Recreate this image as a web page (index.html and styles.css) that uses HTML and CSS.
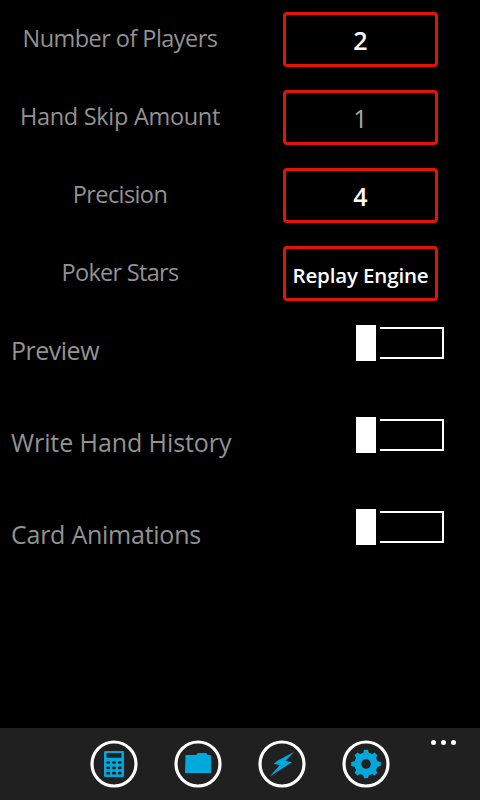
FILE: index.html
```html
<!DOCTYPE html>
<html lang="en">
<head>
<meta charset="utf-8">
<title>Settings</title>
<link rel="stylesheet" href="styles.css">
</head>
<body>
<main class="settings">
  <div class="field"><label class="caption players">Number of Players</label><button class="box">2</button></div>
  <div class="field"><label class="caption skip">Hand Skip Amount</label><button class="box muted">1</button></div>
  <div class="field"><label class="caption precision">Precision</label><button class="box">4</button></div>
  <div class="field"><label class="caption stars">Poker Stars</label><button class="box engine"><span>Replay Engine</span></button></div>
  <div class="option"><span class="name preview">Preview</span><span class="toggle"><i class="thumb"></i><i class="track"></i></span></div>
  <div class="option"><span class="name history">Write Hand History</span><span class="toggle"><i class="thumb"></i><i class="track"></i></span></div>
  <div class="option"><span class="name animations">Card Animations</span><span class="toggle"><i class="thumb"></i><i class="track"></i></span></div>
</main>
<footer class="appbar">
  <svg class="icon" viewBox="0 0 48 48"><circle class="ring" cx="24" cy="24" r="22"/>
    <path class="glyph" fill-rule="evenodd" d="M15.2 11h17.6q1.2 0 1.2 1.2v23.6q0 1.2-1.2 1.2H15.2q-1.2 0-1.2-1.2V12.2q0-1.2 1.2-1.2zM17.5 13h13q1 0 1 1v2.8q0 1-1 1h-13q-1 0-1-1V14q0-1 1-1z"/>
    <g class="keys"><rect x="16.3" y="21.2" width="3.8" height="2.6" rx="1.2"/><rect x="22.1" y="21.2" width="3.8" height="2.6" rx="1.2"/><rect x="27.8" y="21.2" width="3.8" height="2.6" rx="1.2"/><rect x="16.3" y="26.4" width="3.8" height="2.9" rx="1.2"/><rect x="22.1" y="26.4" width="3.8" height="2.9" rx="1.2"/><rect x="27.8" y="26.4" width="3.8" height="2.9" rx="1.2"/><rect x="16.3" y="31.7" width="3.8" height="2.9" rx="1.2"/><rect x="22.1" y="31.7" width="3.8" height="2.9" rx="1.2"/><rect x="27.8" y="31.7" width="3.8" height="2.9" rx="1.2"/></g></svg>
  <svg class="icon" viewBox="0 0 48 48"><circle class="ring" cx="24" cy="24" r="22"/>
    <path class="glyph" d="M11.5 15h11.3v-1l1-1h8.4l1 1v1h3l.8.8V33H11z"/></svg>
  <svg class="icon" viewBox="0 0 48 48"><circle class="ring" cx="24" cy="24" r="22"/>
    <path class="glyph" d="M36.3 11.7 27.6 20.8 33.8 22.3 11.8 36.6 21.8 24.9 15.6 23.9 19 21z"/></svg>
  <svg class="icon" viewBox="0 0 48 48"><circle class="ring" cx="24" cy="24" r="22"/>
    <g class="glyph"><path fill-rule="evenodd" d="M24 12.4a11.6 11.6 0 1 0 0 23.2 11.6 11.6 0 0 0 0-23.2zm0 6.8a4.8 4.8 0 1 1 0 9.6 4.8 4.8 0 0 1 0-9.6z"/>
    <path id="tooth" d="M21 14l1-4.2h4l1 4.2z"/><use href="#tooth" transform="rotate(45 24 24)"/><use href="#tooth" transform="translate(.6 0) rotate(90 24 24)"/><use href="#tooth" transform="rotate(135 24 24)"/><use href="#tooth" transform="rotate(180 24 24)"/><use href="#tooth" transform="rotate(225 24 24)"/><use href="#tooth" transform="translate(-.6 0) rotate(270 24 24)"/><use href="#tooth" transform="rotate(315 24 24)"/></g></svg>
  <div class="more"><i></i><i></i><i></i></div>
</footer>
</body>
</html>
```

FILE: styles.css
```css
* { box-sizing: border-box; }
body {
  margin: 0;
  width: 480px;
  height: 800px;
  display: flex;
  flex-direction: column;
  background: #000;
  color: #929292;
  font-family: "Open Sans", "Noto Sans", sans-serif;
  overflow: hidden;
}
.settings { flex: 1; }
.field {
  height: 78px;
  display: grid;
  grid-template-columns: 240px 240px;
}
.caption {
  padding-top: 22px;
  font-size: 23.5px;
  line-height: 32px;
  text-align: center;
  white-space: nowrap;
}
.players { letter-spacing: -0.55px; }
.skip { letter-spacing: -0.3px; }
.precision { letter-spacing: -0.6px; }
.stars { letter-spacing: -0.7px; }
.box {
  width: 155px;
  height: 55px;
  margin: 12px 0 0 43px;
  padding: 1px 0 0;
  border: 3px solid #e51400;
  border-radius: 4px;
  background: #000;
  color: #fff;
  font: 600 25px/32px "Open Sans", "Noto Sans", sans-serif;
  white-space: nowrap;
}
.muted { color: #aaa; font-weight: 400; }
.engine { padding-top: 3px; font-size: 20.5px; letter-spacing: -0.15px; }
.option {
  height: 92px;
  padding: 13px 36px 0 11px;
  display: flex;
  justify-content: space-between;
}
.name {
  padding-top: 8px;
  font-size: 25px;
  line-height: 34px;
  white-space: nowrap;
}
.preview { letter-spacing: -0.5px; }
.history { letter-spacing: -0.08px; }
.animations { letter-spacing: -0.25px; }
.toggle {
  width: 88px;
  height: 36px;
  display: flex;
  align-items: center;
  gap: 4px;
}
.thumb { width: 20px; height: 36px; background: #fff; }
.track {
  width: 64px;
  height: 32px;
  border: 2px solid #fff;
  border-left: 0;
}
.appbar {
  height: 72px;
  padding: 12px 24px 0 90px;
  display: flex;
  gap: 36px;
  background: #212021;
}
.icon { width: 48px; height: 48px; flex: none; }
.ring { fill: none; stroke: #fff; stroke-width: 3.2; }
.glyph { fill: #00a9dc; }
.keys { fill: #212021; }
.more { display: flex; gap: 5px; margin-left: 5px; }
.more i { width: 5px; height: 5px; border-radius: 50%; background: #fff; }
```
